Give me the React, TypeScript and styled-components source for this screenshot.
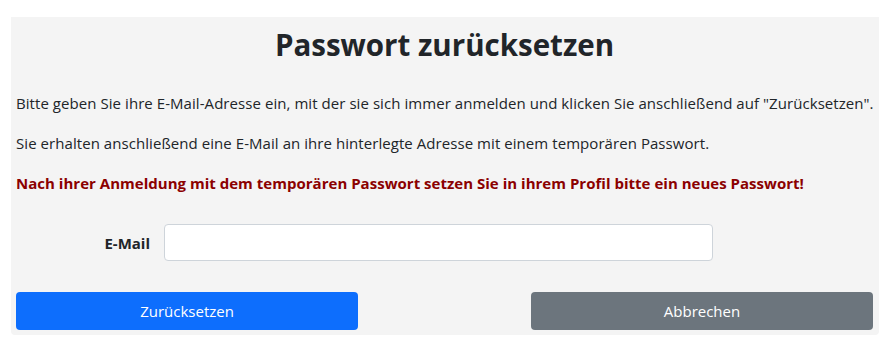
import * as React from 'react';
import styled, { createGlobalStyle } from 'styled-components';

const GlobalStyle = createGlobalStyle`
  body {
    margin: 0;
    background: #fff;
    font-family: "Open Sans", "Noto Sans", sans-serif;
    color: #212529;
  }
`;

const Page = styled.div`
  padding: 17px 14px 0 11px;
`;

const Panel = styled.div`
  background-color: #f4f4f4;
  border-radius: 0 0 4px 4px;
  padding: 9px 6px 5px 5px;
`;

const Title = styled.h1`
  margin: 0 0 27px;
  font-size: 29.5px;
  line-height: 38px;
  font-weight: 700;
  text-align: center;
`;

const Paragraph = styled.p<{ $warning?: boolean }>`
  margin: 0 0 16px;
  font-size: 15px;
  line-height: 24px;
  letter-spacing: ${(p) => (p.$warning ? '0.02px' : '0.06px')};
  font-weight: ${(p) => (p.$warning ? 700 : 400)};
  color: ${(p) => (p.$warning ? '#8b0000' : '#212529')};
  white-space: nowrap;
`;

const FieldRow = styled.div`
  display: flex;
  align-items: center;
  gap: 14px;
  margin-top: 29px;
`;

const Label = styled.label`
  width: 134px;
  text-align: right;
  font-size: 15px;
  font-weight: 700;
`;

const Input = styled.input`
  width: 549px;
  height: 37px;
  box-sizing: border-box;
  border: 1px solid #ced4da;
  border-radius: 4px;
  background: #fff;
  font-size: 16px;
  padding: 6px 12px;
`;

const ButtonRow = styled.div`
  display: flex;
  justify-content: space-between;
  margin-top: 31px;
`;

const Button = styled.button<{ $variant: 'primary' | 'secondary' }>`
  width: 342px;
  height: 38px;
  border: none;
  border-radius: 4px;
  font-family: inherit;
  font-size: 15px;
  color: #fff;
  cursor: pointer;
  background-color: ${(p) => (p.$variant === 'primary' ? '#0d6efd' : '#6c757d')};
`;

const App = () => {
  return (
    <>
      <GlobalStyle />
      <Page>
        <Panel>
          <Title>Passwort zurücksetzen</Title>
          <Paragraph>
            Bitte geben Sie ihre E-Mail-Adresse ein, mit der sie sich immer anmelden und klicken Sie anschließend auf "Zurücksetzen".
          </Paragraph>
          <Paragraph>
            Sie erhalten anschließend eine E-Mail an ihre hinterlegte Adresse mit einem temporären Passwort.
          </Paragraph>
          <Paragraph $warning>
            Nach ihrer Anmeldung mit dem temporären Passwort setzen Sie in ihrem Profil bitte ein neues Passwort!
          </Paragraph>
          <FieldRow>
            <Label htmlFor="email">E-Mail</Label>
            <Input id="email" type="email" />
          </FieldRow>
          <ButtonRow>
            <Button $variant="primary">Zurücksetzen</Button>
            <Button $variant="secondary">Abbrechen</Button>
          </ButtonRow>
        </Panel>
      </Page>
    </>
  );
};

export default App;
